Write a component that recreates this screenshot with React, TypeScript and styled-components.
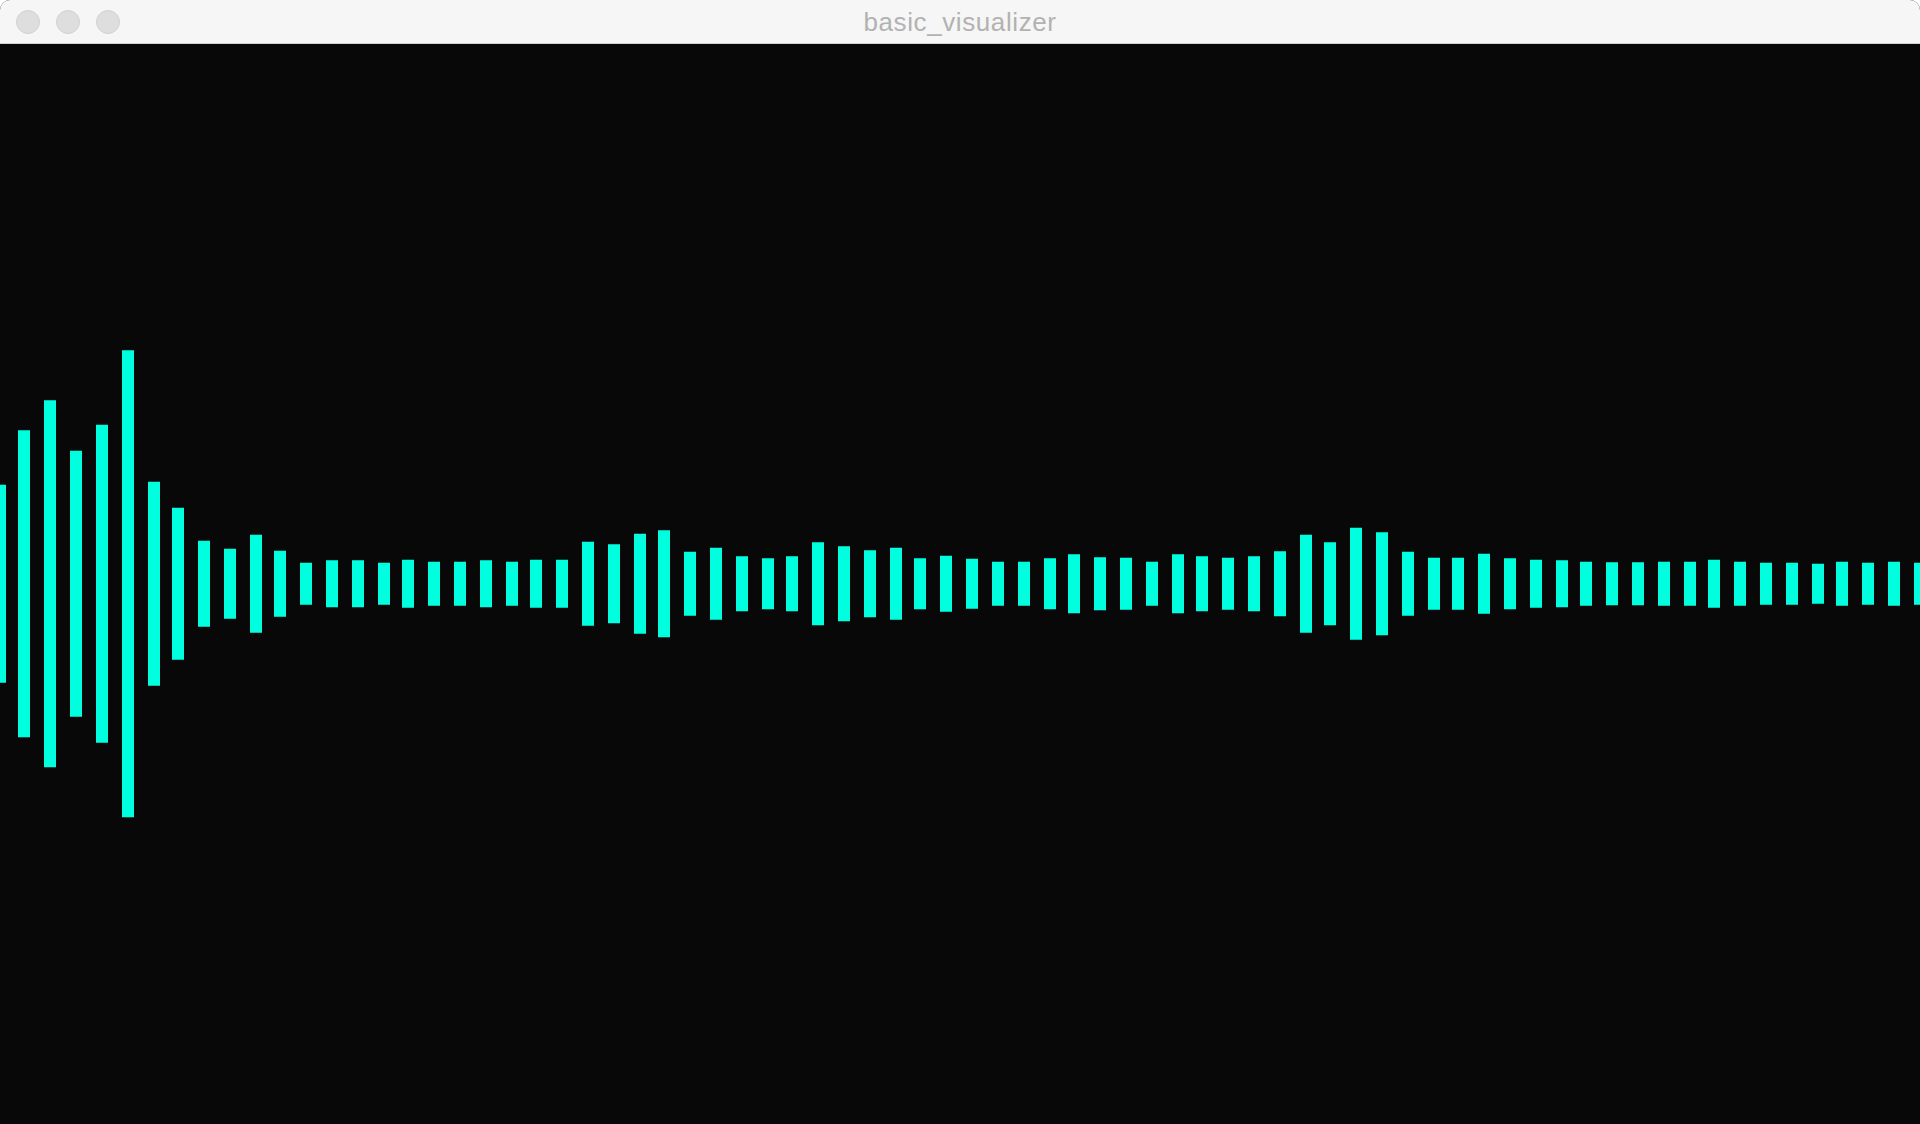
import React from "react";
import styled, { createGlobalStyle } from "styled-components";

const GlobalStyle = createGlobalStyle`
  html, body {
    margin: 0;
    padding: 0;
    background: #ffffff;
    overflow: hidden;
  }
  #root {
    height: 100vh;
  }
`;

const Window = styled.div`
  display: flex;
  flex-direction: column;
  width: 100%;
  height: 100vh;
  border-radius: 10px 10px 0 0;
  overflow: hidden;
  background: #080808;
`;

const TitleBar = styled.header`
  display: grid;
  grid-template-columns: 1fr auto 1fr;
  align-items: center;
  height: 43px;
  flex: 0 0 43px;
  background: #f6f6f6;
  border-bottom: 1px solid #d3d3d3;
  padding: 0 16px;
`;

const Lights = styled.div`
  display: flex;
  align-items: center;
  gap: 16px;
`;

const Light = styled.span`
  display: block;
  width: 24px;
  height: 24px;
  box-sizing: border-box;
  border-radius: 50%;
  background: #dedede;
  border: 1px solid #d1d1d1;
`;

const Title = styled.h1`
  margin: 0;
  padding-top: 1px;
  font-family: "Liberation Sans", Arial, sans-serif;
  font-weight: 400;
  font-size: 26px;
  letter-spacing: 0.6px;
  line-height: 43px;
  color: #b2b2b2;
  white-space: nowrap;
`;

const Canvas = styled.main`
  flex: 1 1 auto;
  background: #080808;
  overflow: hidden;
`;

const Wave = styled.svg`
  display: block;
  width: 1920px;
  height: 1080px;
`;

const HEIGHTS = [
  198, 307, 367, 266, 318, 467, 204, 152, 86, 70, 98, 66, 42, 47, 47, 42, 48,
  44, 44, 47, 44, 48, 48, 84, 79, 100, 107, 64, 72, 55, 51, 55, 83, 75, 67, 72,
  51, 56, 50, 44, 44, 51, 59, 53, 52, 44, 59, 55, 52, 55, 65, 98, 83, 112, 103,
  64, 52, 52, 60, 51, 48, 47, 44, 43, 43, 44, 44, 48, 44, 42, 42, 40, 44, 42,
  44, 42,
];

const CENTER = 539.75;
const BAR_W = 12;

function Waveform() {
  return (
    <Wave viewBox="0 0 1920 1080" xmlns="http://www.w3.org/2000/svg">
      {HEIGHTS.map((h, i) => {
        const x = 2 * Math.ceil(i * 12.8 - 3.8);
        return (
          <rect
            key={i}
            x={x}
            y={CENTER - h / 2}
            width={BAR_W}
            height={h}
            fill="#00ffdf"
          />
        );
      })}
    </Wave>
  );
}

export default function App() {
  return (
    <>
      <GlobalStyle />
      <Window>
        <TitleBar>
          <Lights>
            <Light />
            <Light />
            <Light />
          </Lights>
          <Title>basic_visualizer</Title>
          <div />
        </TitleBar>
        <Canvas>
          <Waveform />
        </Canvas>
      </Window>
    </>
  );
}
